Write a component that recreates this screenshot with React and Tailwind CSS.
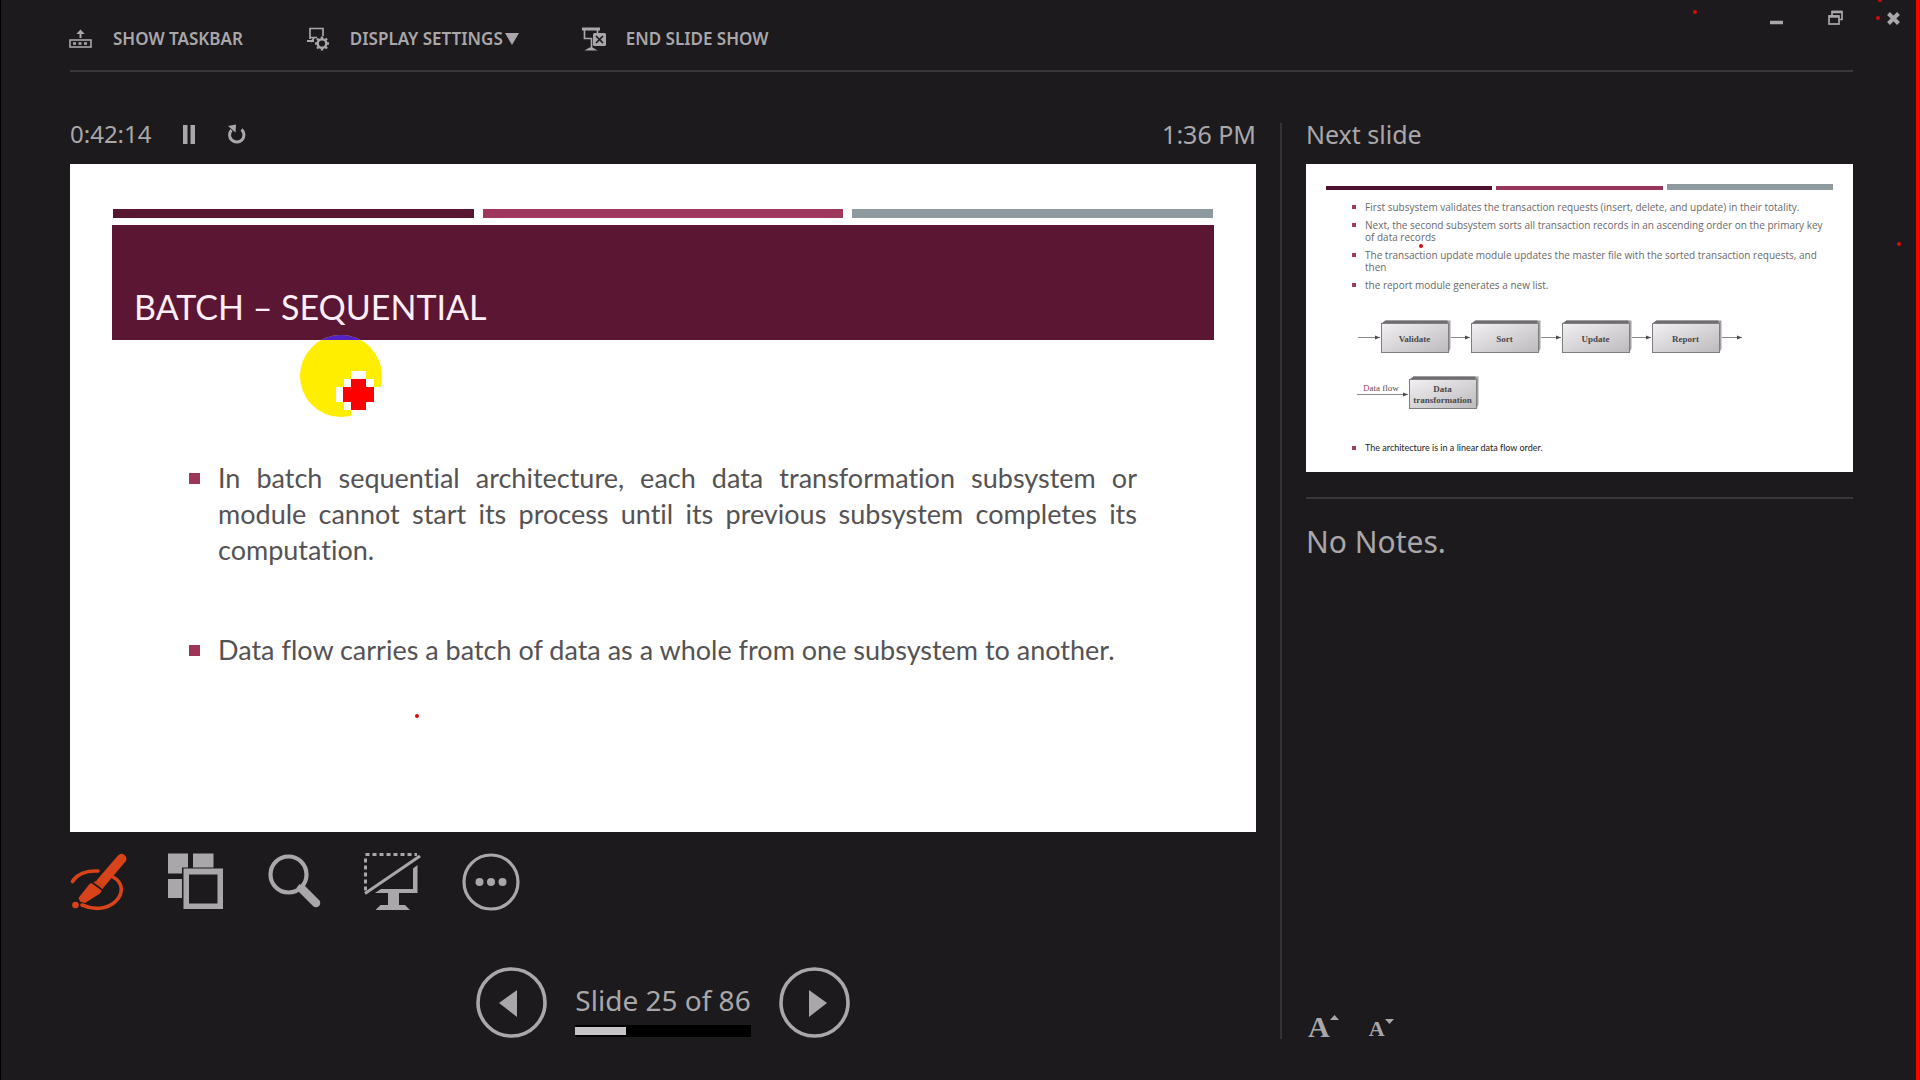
const ink = "text-[#a9a7aa]";

function TaskbarIcon() {
  return (
    <svg width="24" height="24" viewBox="0 0 24 24" fill="none" stroke="currentColor" aria-hidden="true">
      <rect x="1" y="13" width="21" height="7" strokeWidth="1.6" />
      <path d="M4 16.5h3M9.500 16.500h3M15 16.500h3" strokeWidth="2.400" />
      <path d="M11.500 11V5" strokeWidth="2" />
      <path d="M11.500 2.500l4.200 4.500h-8.400z" fill="currentColor" stroke="none" />
    </svg>
  );
}

function DisplayIcon() {
  return (
    <svg width="24" height="24" viewBox="0 0 24 24" fill="none" stroke="currentColor" aria-hidden="true">
      <path d="M4 12V1.500h13V9M4 10.500h7M8 11l-3 4" strokeWidth="1.700" />
      <path d="M1 14h7" strokeWidth="2" />
      <circle cx="16" cy="16.500" r="4.300" strokeWidth="2.400" />
      <path d="M16 9.500v2M16 21.500v2M9 16.500h2M21 16.500h2M11 11.500l1.500 1.500M19.500 20l1.500 1.500M11 21.500l1.500-1.500M19.500 13l1.500-1.500" strokeWidth="2.400" />
    </svg>
  );
}

function EndShowIcon() {
  return (
    <svg width="24" height="24" viewBox="0 0 24 24" fill="none" stroke="currentColor" aria-hidden="true">
      <path d="M0 2h18" strokeWidth="3" />
      <path d="M2.500 3v8.500h7M15.500 3v3M9.500 11v10" strokeWidth="1.700" />
      <path d="M7.500 20.500h3l5 3H2.500z" fill="currentColor" stroke="none" />
      <rect x="11" y="6" width="13" height="13" rx="1.500" fill="currentColor" stroke="none" />
      <path d="M14 9l7 7M21 9l-7 7" stroke="#1c1a1d" strokeWidth="1.700" />
    </svg>
  );
}

function PenIcon() {
  return (
    <svg width="58" height="58" viewBox="0 0 58 58" fill="none" aria-hidden="true">
      <path d="M2.500 28.500C7 21 17 17.500 28 18" stroke="#d8431a" strokeWidth="3.600" strokeLinecap="round" />
      <path d="M43 24c11 6 10 17 3 24-9 9-23 9-34 4" stroke="#d8431a" strokeWidth="3.600" strokeLinecap="round" />
      <path d="M26 28L48 2.500q3-3 6.500-.5 3.500 3 1 6.500L34 34z" fill="#d8431a" />
      <path d="M19.500 31L26 28l8 6-4 6.500L15 50l-5-1.500-1.500-3.500z" fill="#d8431a" />
      <path d="M21 28.500l12 9" stroke="#1c1a1d" strokeWidth="1.600" />
      <circle cx="5.500" cy="52" r="3.300" fill="#d8431a" />
    </svg>
  );
}

function SlidesIcon() {
  return (
    <svg width="58" height="58" viewBox="0 0 58 58" fill="currentColor" aria-hidden="true">
      <path d="M0 .5h20v14h-6v6H0zM25 .5h20.500v14H25zM0 26h14v19H0z" />
      <path fillRule="evenodd" d="M15.500 15.500H55V56H15.500zM21 21.500v29h28.500v-29z" />
    </svg>
  );
}

function ZoomIcon() {
  return (
    <svg width="58" height="58" viewBox="0 0 58 58" fill="none" stroke="currentColor" aria-hidden="true">
      <circle cx="22.500" cy="21.500" r="18" strokeWidth="4.200" />
      <path d="M36 36L50 50" strokeWidth="8.500" strokeLinecap="round" />
      <path d="M32 33l5 4" strokeWidth="5" />
    </svg>
  );
}

function BlackScreenIcon() {
  return (
    <svg width="58" height="58" viewBox="0 0 58 58" fill="none" stroke="currentColor" aria-hidden="true">
      <path d="M1.500 1.500H53" strokeWidth="3" strokeDasharray="4 3" />
      <path d="M1.500 5.500V38" strokeWidth="3" strokeDasharray="4 3" />
      <path d="M1 40.500L56 3" strokeWidth="3" />
      <path d="M53.500 12L49 15.500v20.500H17l-6 4h42.500z" fill="currentColor" stroke="none" />
      <path d="M24 39h11v13h6l5 5H11.500l5-5H24z" fill="currentColor" stroke="none" />
    </svg>
  );
}

function MoreIcon() {
  return (
    <svg width="58" height="58" viewBox="0 0 58 58" fill="currentColor" aria-hidden="true">
      <circle cx="29" cy="29" r="27" fill="none" stroke="currentColor" strokeWidth="3.200" />
      <circle cx="17.500" cy="29" r="4" />
      <circle cx="29" cy="29" r="4" />
      <circle cx="40.500" cy="29" r="4" />
    </svg>
  );
}

function ArrowButton({ label, points }) {
  return (
    <button type="button" aria-label={label}>
      <svg width="71" height="71" viewBox="0 0 71 71" aria-hidden="true">
        <circle cx="35.500" cy="35.500" r="33.500" fill="none" stroke="currentColor" strokeWidth="3.600" />
        <polygon points={points} fill="currentColor" />
      </svg>
    </button>
  );
}

function Bullet({ children }) {
  return (
    <li className="flex gap-[18px]">
      <span className="mt-[13px] size-[11px] shrink-0 bg-[#9c3558]" />
      <p className="flex-1 text-justify">{children}</p>
    </li>
  );
}

function NextBullet({ children }) {
  return (
    <li className="flex gap-[9px]">
      <span className="mt-1 size-1 shrink-0 bg-[#a03c5c]" />
      <p className="flex-1">{children}</p>
    </li>
  );
}

function FlowBox({ x, y, lines }) {
  return (
    <g>
      <path d={`M${x} ${y}l4-3h65v28l-2 4z`} fill="#a3a1a4" />
      <path d={`M${x} ${y}l4-3h62v3z`} fill="#6f6d6f" />
      <rect x={x} y={y} width="67" height="29" fill="url(#box)" stroke="#7f7d80" />
      {lines.map((line, i) => (
        <text
          key={line}
          x={x + 33}
          y={y + (lines.length === 1 ? 18 : 12 + i * 11)}
          textAnchor="middle"
          className="fill-[#4a484a] font-bold"
        >
          {line}
        </text>
      ))}
    </g>
  );
}

function Arrow({ x1, x2, y }) {
  return (
    <g>
      <path d={`M${x1} ${y}H${x2}`} stroke="#8a888a" />
      <polygon points={`${x2},${y} ${x2 - 5},${y - 2} ${x2 - 5},${y + 2}`} fill="#4c4a4c" />
    </g>
  );
}

function FlowDiagram() {
  return (
    <svg
      viewBox="0 0 390 90"
      className="w-[390px] font-['Liberation_Serif',serif] text-[9px]"
      role="img"
      aria-label="Validate, Sort, Update and Report in sequence"
    >
      <defs>
        <linearGradient id="box" x1="0" y1="0" x2="1" y2="1">
          <stop offset="0" stopColor="#f2f0f2" />
          <stop offset="1" stopColor="#bcbabd" />
        </linearGradient>
      </defs>
      <FlowBox x={24.5} y={4.5} lines={["Validate"]} />
      <FlowBox x={114.5} y={4.5} lines={["Sort"]} />
      <FlowBox x={205.5} y={4.5} lines={["Update"]} />
      <FlowBox x={295.5} y={4.5} lines={["Report"]} />
      <Arrow x1={1} x2={23} y={18.5} />
      <Arrow x1={94} x2={113} y={18.5} />
      <Arrow x1={184} x2={204} y={18.5} />
      <Arrow x1={275} x2={294} y={18.5} />
      <Arrow x1={365} x2={385} y={18.5} />
      <Arrow x1={0} x2={51} y={75.5} />
      <text x="6" y="72" className="fill-[#5a4a50]">
        <tspan className="fill-[#b04a60]">D</tspan>ata flow
      </text>
      <FlowBox x={52.5} y={60.5} lines={["Data", "transformation"]} />
    </svg>
  );
}

function Pointer() {
  return (
    <svg width="84" height="84" viewBox="0 0 84 84" className="absolute top-[170px] left-[229px]" aria-hidden="true">
      <ellipse cx="42" cy="42" rx="41" ry="41" fill="#ffee00" />
      <path d="M22 6Q42-4 62 6z" fill="#5222c4" />
      <path d="M52 37h15v8h8v8h7v15h-7v8h-8v8H52v-8h-7v-8h-8V53h8v-8h7z" fill="#fff" />
      <path d="M52 45h15v8h8v15h-8v8H52v-8h-8V53h8z" fill="#f00" />
    </svg>
  );
}

const marks = [
  "left-[1692px] top-[10px]",
  "left-[1877px] -top-[2px]",
  "left-[1875px] top-[16px]",
  "left-[1896px] top-[242px]",
  "left-[1418px] top-[244px]",
  "left-[414px] top-[714px]",
];

export default function App() {
  return (
    <div className={`relative flex min-h-screen flex-col overflow-hidden border-l border-black bg-[#1c1a1d] pb-[41px] font-['Noto_Sans',sans-serif] ${ink}`}>
      <header className="flex h-[70px] items-start justify-between pr-5 pl-[68px]">
        <nav className="flex items-center gap-[63px] pt-[27px] text-[17px] leading-6 font-semibold">
          <button type="button" className="flex items-center gap-5">
            <TaskbarIcon />
            SHOW TASKBAR
          </button>
          <button type="button" className="flex items-center gap-5">
            <DisplayIcon />
            <span className="flex items-center gap-[2px]">
              DISPLAY SETTINGS
              <svg width="14" height="12" viewBox="0 0 14 12" fill="currentColor" aria-hidden="true">
                <path d="M0 0h14L7 12z" />
              </svg>
            </span>
          </button>
          <button type="button" className="flex items-center gap-5">
            <EndShowIcon />
            END SLIDE SHOW
          </button>
        </nav>
        <div className="flex gap-[44px] pt-[10px]">
          <button type="button" aria-label="Minimize">
            <svg width="14" height="16" viewBox="0 0 14 16" aria-hidden="true">
              <path d="M0 12.500h13" stroke="currentColor" strokeWidth="3.500" />
            </svg>
          </button>
          <button type="button" aria-label="Restore">
            <svg width="15" height="16" viewBox="0 0 15 16" fill="none" stroke="currentColor" aria-hidden="true">
              <path d="M4 6V1.500h10v8h-3" strokeWidth="1.700" />
              <path d="M4 2h10" strokeWidth="2.500" />
              <rect x="1" y="6" width="10" height="8" strokeWidth="1.700" />
              <path d="M1 6.500h10" strokeWidth="2.500" />
            </svg>
          </button>
          <button type="button" aria-label="Close">
            <svg width="13" height="15" viewBox="0 0 13 15" aria-hidden="true">
              <path d="M1.500 2.500l10 10M11.500 2.500l-10 10" stroke="currentColor" strokeWidth="4" />
            </svg>
          </button>
        </div>
      </header>

      <hr className="mr-[67px] ml-[69px] h-[2px] border-0 bg-[#383839]" />

      <main className="mt-[51px] mr-[67px] ml-[69px] grid flex-1 grid-cols-[1186fr_2px_547fr] gap-x-6">
        <section className="flex flex-col">
          <div className="flex h-[22px] items-center text-[25px] leading-[22px]">
            <span className="text-[24px]">0:42:14</span>
            <button type="button" aria-label="Pause timer" className="ml-[31px]">
              <svg width="12" height="19" viewBox="0 0 12 19" fill="currentColor" aria-hidden="true">
                <path d="M0 0h4.500v19H0zM7.500 0H12v19H7.500z" />
              </svg>
            </button>
            <button type="button" aria-label="Restart timer" className="ml-[32px]">
              <svg width="19" height="20" viewBox="0 0 19 20" fill="none" aria-hidden="true">
                <path d="M14.500 5.500A7.200 7.200 0 1 1 4.500 6" stroke="currentColor" strokeWidth="3" />
                <path d="M1 2l8-1.500-.5 8z" fill="currentColor" />
              </svg>
            </button>
            <span className="ml-auto">1:36 PM</span>
          </div>

          <article className="relative mt-[19px] aspect-[1186/668] bg-white px-[42px] pt-[45px] font-[Lato,sans-serif] [font-variant-ligatures:none]">
            <div className="grid grid-cols-3 gap-[9px] px-px">
              <span className="h-[9px] bg-[#591632]" />
              <span className="h-[9px] bg-[#a0375f]" />
              <span className="h-[9px] bg-[#8e9aa0]" />
            </div>
            <div className="mt-[7px] flex h-[115px] items-end bg-[#5a1633] px-[22px] pb-3">
              <h1 className="text-[34px] leading-[42px] text-[#fdeef8]">BATCH – SEQUENTIAL</h1>
            </div>
            <ul className="mt-[120px] ml-[77px] mr-[77px] flex flex-col gap-[64px] text-[27px] leading-9 text-[#545255]">
              <Bullet>
                In batch sequential architecture, each data transformation subsystem or module cannot start its
                process until its previous subsystem completes its computation.
              </Bullet>
              <Bullet>Data flow carries a batch of data as a whole from one subsystem to another.</Bullet>
            </ul>
            <Pointer />
          </article>

          <div className="mt-[21px] flex gap-10" role="toolbar" aria-label="Slide tools">
            <button type="button" aria-label="Pen and laser pointer tools"><PenIcon /></button>
            <button type="button" aria-label="See all slides"><SlidesIcon /></button>
            <button type="button" aria-label="Zoom into the slide"><ZoomIcon /></button>
            <button type="button" aria-label="Black or unblack slide show"><BlackScreenIcon /></button>
            <button type="button" aria-label="More slide show options"><MoreIcon /></button>
          </div>

          <div className="mt-[56px] flex items-center justify-center gap-7">
            <ArrowButton label="Previous slide" points="23,36 41,23 41,50" />
            <div className="flex flex-col gap-[7px] pt-[13px]">
              <span className="text-[28px] leading-9 whitespace-nowrap">Slide 25 of 86</span>
              <div className="h-3 bg-black py-[2px]">
                <div className="h-2 w-[29%] bg-[#c6c4c6]" />
              </div>
            </div>
            <ArrowButton label="Next slide" points="30,23 48,36 30,50" />
          </div>
        </section>

        <div className="bg-[#333234]" />

        <section className="flex flex-col">
          <h2 className="h-[22px] text-[25px] leading-[22px]">Next slide</h2>
          <article className="mt-[19px] flex aspect-[547/308] flex-col bg-white pt-5 pl-5 font-[Lato,sans-serif] [font-variant-ligatures:none]">
            <div className="mr-5 grid grid-cols-3 items-end gap-1">
              <span className="h-1 bg-[#4d1230]" />
              <span className="h-1 bg-[#963459]" />
              <span className="h-[6px] bg-[#8e9aa0]" />
            </div>
            <ul className="mt-[11px] mr-[26px] ml-[26px] flex flex-col gap-[6px] font-['Open_Sans',sans-serif] text-[10px] leading-3 text-[#6a686b]">
              <NextBullet>First subsystem validates the transaction requests (insert, delete, and update) in their totality.</NextBullet>
              <NextBullet>Next, the second subsystem sorts all transaction records in an ascending order on the primary key of data records</NextBullet>
              <NextBullet>The transaction update module updates the master file with the sorted transaction requests, and then</NextBullet>
              <NextBullet>the report module generates a new list.</NextBullet>
            </ul>
            <div className="mt-7 ml-[31px]">
              <FlowDiagram />
            </div>
            <ul className="mt-[33px] ml-[26px] text-[9px] leading-3 text-[#222]">
              <NextBullet>The architecture is in a linear data flow order.</NextBullet>
            </ul>
          </article>
          <hr className="mt-[25px] h-[2px] border-0 bg-[#383639]" />
          <p className="mt-[25px] text-[30px] leading-9">No Notes.</p>
          <div className="mt-auto flex items-end gap-[30px] pl-[2px] font-['Liberation_Serif',serif] font-bold">
            <button type="button" aria-label="Make the text larger" className="flex items-start">
              <span className="text-[30px] leading-6">A</span>
              <svg width="9" height="5" viewBox="0 0 9 5" fill="currentColor" aria-hidden="true"><path d="M0 5h9L4.500 0z" /></svg>
            </button>
            <button type="button" aria-label="Make the text smaller" className="flex items-start">
              <span className="text-[22px] leading-5">A</span>
              <svg width="9" height="5" viewBox="0 0 9 5" fill="currentColor" aria-hidden="true"><path d="M0 0h9L4.500 5z" /></svg>
            </button>
          </div>
        </section>
      </main>

      <div className="absolute inset-y-0 right-0 w-1 border-r border-black bg-[#f00]" />
      {marks.map((place) => (
        <span key={place} className={`absolute size-1 rounded-full bg-[#d80a0a] ${place}`} />
      ))}
    </div>
  );
}
